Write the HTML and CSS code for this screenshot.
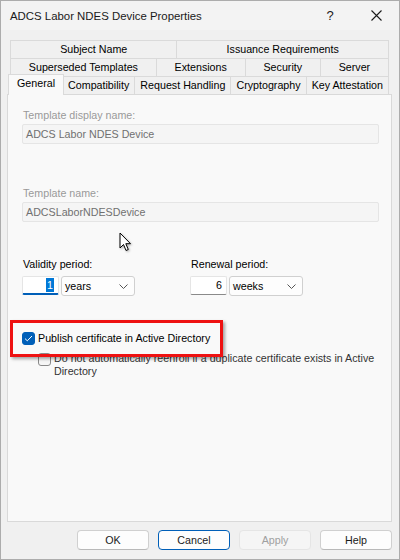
FILE: index.html
```html
<!DOCTYPE html>
<html lang="en">
<head>
    <meta charset="UTF-8">
    <meta name="viewport" content="width=device-width, initial-scale=1.0">
    <title>ADCS Labor NDES Device Properties</title>
    <link rel="stylesheet" href="styles.css">
</head>
<body>
    <div class="window">
        <div class="titlebar">
            <span class="title">ADCS Labor NDES Device Properties</span>
            <span class="help-btn">?</span>
            <span class="close-btn">
                <svg width="11" height="11" viewBox="0 0 11 11">
                    <path d="M0.5 0.5 L10.5 10.5 M10.5 0.5 L0.5 10.5" stroke="#1a1a1a" stroke-width="1.1" fill="none"/>
                </svg>
            </span>
        </div>

        <div class="tabs">
            <div class="tab-row">
                <div class="tab">Subject Name</div>
                <div class="tab">Issuance Requirements</div>
            </div>
            <div class="tab-row">
                <div class="tab">Superseded Templates</div>
                <div class="tab">Extensions</div>
                <div class="tab">Security</div>
                <div class="tab">Server</div>
            </div>
            <div class="tab-row">
                <div class="tab active">General</div>
                <div class="tab">Compatibility</div>
                <div class="tab">Request Handling</div>
                <div class="tab">Cryptography</div>
                <div class="tab">Key Attestation</div>
            </div>
        </div>

        <div class="panel">
            <label class="field-label disabled">Template display name:</label>
            <div class="text-input disabled">ADCS Labor NDES Device</div>

            <label class="field-label disabled second">Template name:</label>
            <div class="text-input disabled">ADCSLaborNDESDevice</div>

            <div class="periods">
                <div class="period">
                    <label class="field-label">Validity period:</label>
                    <div class="period-controls">
                        <div class="spin focused"><span class="selected">1</span></div>
                        <div class="combo">
                            <span>years</span>
                            <svg width="9" height="5" viewBox="0 0 9 5">
                                <path d="M0.5 0.5 L4.5 4.5 L8.5 0.5" stroke="#555" fill="none"/>
                            </svg>
                        </div>
                    </div>
                </div>
                <div class="period">
                    <label class="field-label">Renewal period:</label>
                    <div class="period-controls">
                        <div class="spin">6</div>
                        <div class="combo">
                            <span>weeks</span>
                            <svg width="9" height="5" viewBox="0 0 9 5">
                                <path d="M0.5 0.5 L4.5 4.5 L8.5 0.5" stroke="#555" fill="none"/>
                            </svg>
                        </div>
                    </div>
                </div>
            </div>

            <div class="check-row">
                <span class="checkbox checked">
                    <svg width="9" height="7" viewBox="0 0 9 7">
                        <path d="M1 3.6 L3.3 5.8 L8 1" stroke="#fff" stroke-width="1" fill="none"/>
                    </svg>
                </span>
                <span>Publish certificate in Active Directory</span>
            </div>
            <div class="check-row sub">
                <span class="checkbox"></span>
                <span class="check-text">Do not automatically reenroll if a duplicate certificate exists in Active Directory</span>
            </div>

            <!-- highlight frame drawn over the publish option -->
            <div class="highlight"></div>

            <svg class="pointer" width="14" height="21" viewBox="0 0 14 21">
                <path d="M1 1 L1 16 L4.5 12.5 L7 18.5 L9.3 17.5 L6.8 11.7 L11.5 11.7 Z" fill="#fff" stroke="#000" stroke-width="1" stroke-linejoin="round"/>
            </svg>
        </div>

        <div class="buttons">
            <button class="btn">OK</button>
            <button class="btn default">Cancel</button>
            <button class="btn" disabled>Apply</button>
            <button class="btn">Help</button>
        </div>
    </div>
</body>
</html>
```

FILE: styles.css
```css
* {
    margin: 0;
    padding: 0;
    box-sizing: border-box;
}

body {
    font-family: "Segoe UI", "Liberation Sans", Arial, sans-serif;
    font-size: 10.7px;
    color: #000;
    background: #fff;
}

.window {
    width: 400px;
    height: 560px;
    border: 1px solid #acacac;
    background: #f0f0f0;
    display: flex;
    flex-direction: column;
}

/* title bar */

.titlebar {
    height: 29px;
    background: #f3f3f3;
    display: flex;
    align-items: center;
    padding-left: 9px;
}

.title {
    flex: 1;
    font-size: 11.4px;
    color: #1a1a1a;
}

.help-btn {
    width: 46px;
    text-align: center;
    font-size: 13px;
    color: #1a1a1a;
}

.close-btn {
    width: 46px;
    height: 29px;
    display: flex;
    align-items: center;
    justify-content: center;
}

/* tab strip */

.tabs {
    margin: 10px 10px 0 9px;
}

.tab-row {
    display: flex;
    height: 18px;
}

.tab {
    flex: 1 1 auto;
    border: 1px solid #dadada;
    border-bottom: none;
    margin-left: -1px;
    padding: 0 4px;
    line-height: 17px;
    text-align: center;
    white-space: nowrap;
    background: #f0f0f0;
}

.tab:first-child {
    margin-left: 0;
}

.tab.active {
    flex: 0 0 auto;
    position: relative;
    z-index: 1;
    margin: -2px -1px -1px -2px;
    padding: 0 8px;
    height: 21px;
    line-height: 17px;
    background: #f9f9f9;
}

/* property page */

.panel {
    position: relative;
    height: 428px;
    margin: 0 7px 0 6px;
    border: 1px solid #d9d9d9;
    background: #f9f9f9;
    padding: 13px 12px 0 14px;
}

.field-label {
    display: block;
    line-height: 14px;
    padding-left: 1px;
}

.field-label.disabled {
    color: #9a9a9a;
}

.field-label.second {
    margin-top: 42px;
}

.text-input {
    height: 20px;
    margin-top: 2px;
    border: 1px solid #e5e5e5;
    border-radius: 2px;
    padding-left: 3px;
    line-height: 18px;
}

.text-input.disabled {
    background: #f5f5f5;
    color: #707070;
}

.periods {
    display: flex;
    margin-top: 35px;
}

.period {
    width: 168px;
}

.period-controls {
    display: flex;
    gap: 2px;
    margin-top: 5px;
}

.spin {
    width: 37px;
    height: 19px;
    background: #fff;
    border: 1px solid #e5e5e5;
    border-bottom: 1px solid #8a8a8a;
    border-radius: 2px;
    text-align: right;
    padding-right: 4px;
    line-height: 17px;
}

.spin.focused {
    border-bottom: 2px solid #005fb8;
}

.spin .selected {
    background: #0078d7;
    color: #fff;
    padding: 1px 1px;
}

.combo {
    width: 74px;
    height: 20px;
    background: #fdfdfd;
    border: 1px solid #d0d0d0;
    border-radius: 3px;
    display: flex;
    align-items: center;
    justify-content: space-between;
    padding: 0 6px 0 3px;
}

/* checkboxes */

.check-row {
    display: flex;
    align-items: flex-start;
    gap: 3px;
    margin-top: 35px;
    line-height: 14px;
}

.check-row.sub {
    margin-top: 7px;
    padding-left: 16px;
    line-height: 13px;
}

.check-text {
    width: 328px;
    color: #333;
}

.checkbox {
    flex: 0 0 13px;
    width: 13px;
    height: 13px;
    margin-top: 1px;
    border: 1px solid #8a8a8a;
    border-radius: 3px;
    background: #f6f6f6;
    display: flex;
    align-items: center;
    justify-content: center;
}

.checkbox.checked {
    background: #005fb8;
    border-color: #005fb8;
}

.highlight {
    position: absolute;
    left: 2px;
    top: 225px;
    width: 213px;
    height: 37px;
    border: 3px solid #ee1111;
    box-shadow: 2px 2px 3px rgba(0, 0, 0, 0.35);
}

.pointer {
    position: absolute;
    left: 111px;
    top: 137px;
    filter: drop-shadow(1px 1px 1px rgba(0, 0, 0, 0.3));
}

/* dialog buttons */

.buttons {
    display: flex;
    justify-content: flex-end;
    gap: 9px;
    margin: 8px 7px 0 0;
}

.btn {
    width: 72px;
    height: 20px;
    font-family: inherit;
    font-size: 10.7px;
    background: #fdfdfd;
    border: 1px solid #d0d0d0;
    border-bottom-color: #b9b9b9;
    border-radius: 4px;
    color: #1a1a1a;
}

.btn.default {
    border: 1px solid #005fb8;
}

.btn:disabled {
    background: #f5f5f5;
    border-color: #e5e5e5;
    color: #a0a0a0;
}
```
